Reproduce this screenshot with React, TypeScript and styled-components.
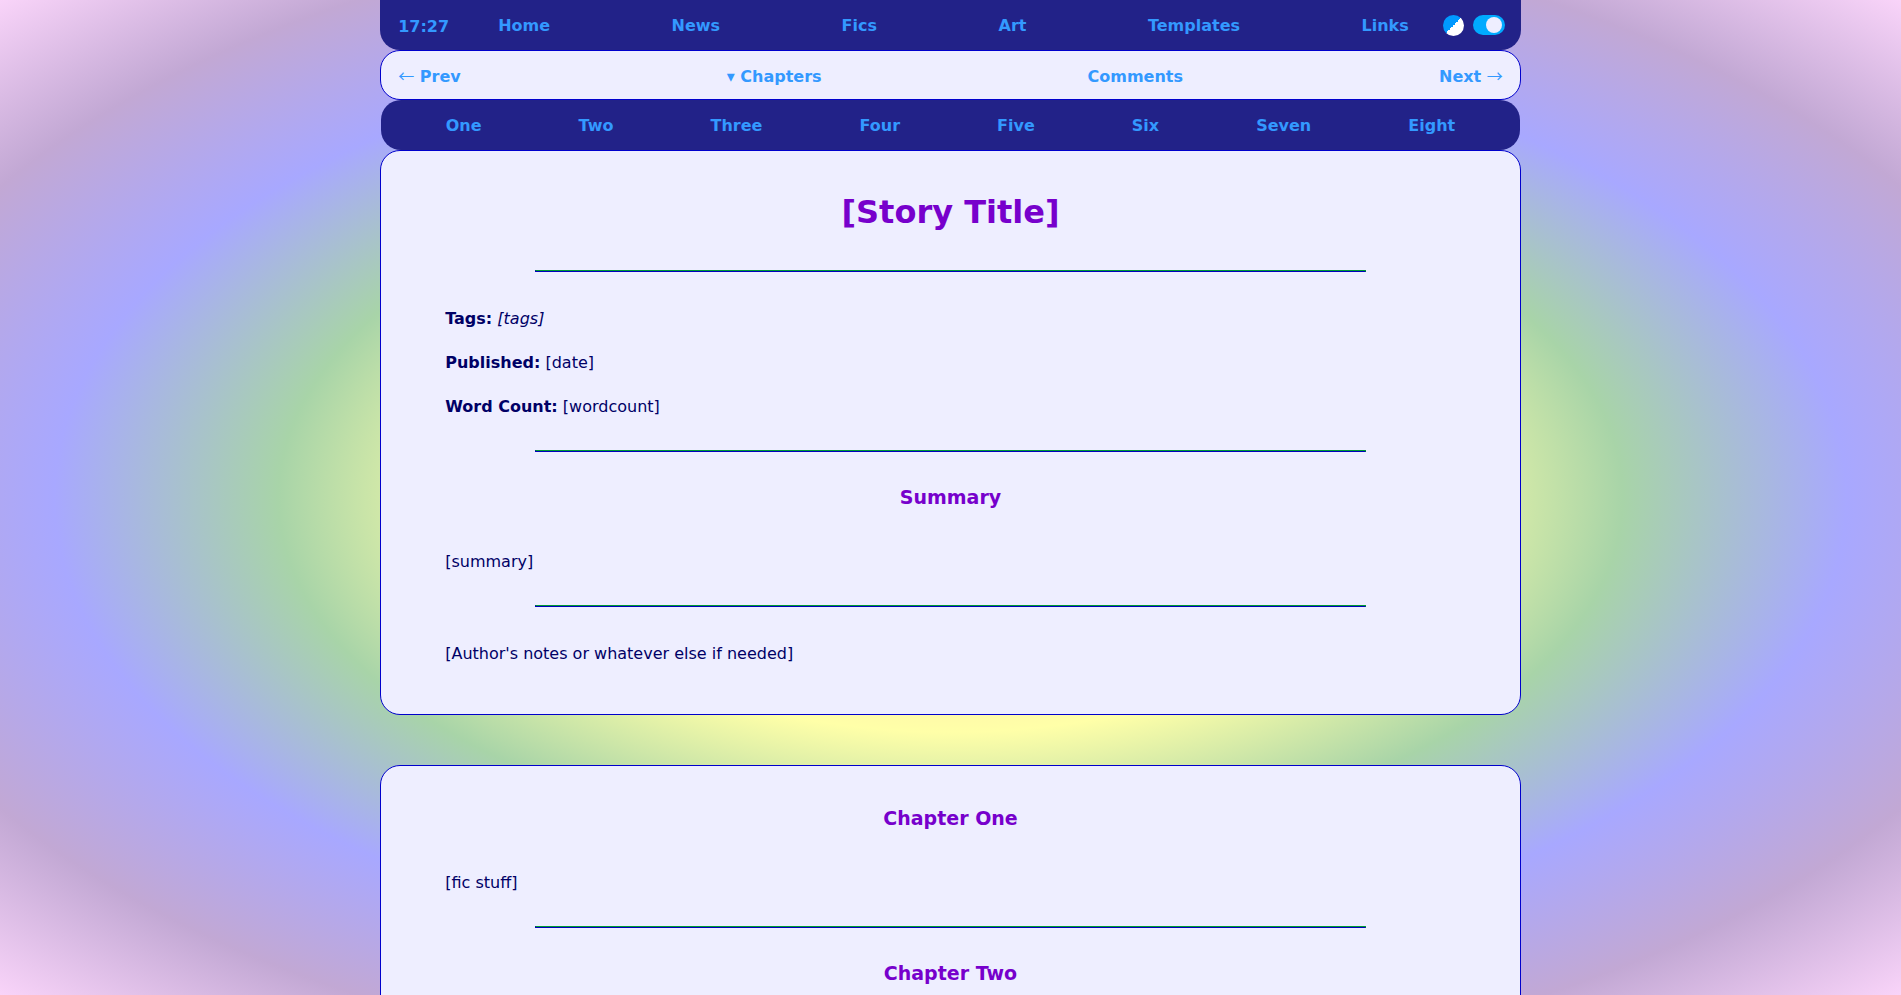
import React, { useState } from 'react';
import styled, { createGlobalStyle } from 'styled-components';

const GlobalStyle = createGlobalStyle`
  *, *::before, *::after {
    box-sizing: border-box;
  }
  html {
    background: radial-gradient(
      ellipse at center,
      #ffa8a8,
      #ffe0a8,
      #ffffa8,
      #a8d4a8,
      #a8a8ff,
      #c2a8d4,
      #f9d4f9
    ) fixed;
    scrollbar-width: none;
  }
  body {
    margin: 0;
    color: #000066;
    font-family: Verdana, "DejaVu Sans", sans-serif;
    font-size: 16px;
    line-height: 28px;
  }
`;

const Page = styled.div`
  width: 60%;
  margin: 0 auto;
`;

const TopBar = styled.header`
  display: flex;
  align-items: center;
  height: 50px;
  padding: 0 16px 0 18px;
  border-radius: 0 0 20px 20px;
  background: #222288;
  color: #3399ff;
  font-weight: bold;
`;

const Clock = styled.time`
  padding-top: 4px;
`;

const SiteLinks = styled.nav`
  flex: 1;
  display: flex;
  justify-content: space-between;
  margin: 0 34px 0 49px;
  padding-top: 2px;
`;

const BarLink = styled.a`
  color: #3399ff;
  font-weight: bold;
  text-decoration: none;
  white-space: nowrap;

  &:hover {
    text-decoration: underline;
  }
`;

const Controls = styled.div`
  display: flex;
  align-items: center;
  gap: 9px;
`;

const ContrastButton = styled.button`
  width: 21px;
  height: 21px;
  padding: 0;
  border: 0;
  border-radius: 50%;
  background: linear-gradient(135deg, #0099ff 50%, #ffffff 50%);
  cursor: pointer;
`;

const ThemeSwitch = styled.input`
  appearance: none;
  display: flex;
  align-items: center;
  width: 32px;
  height: 20px;
  margin: 0;
  padding: 0 3px;
  border-radius: 10px;
  background: #00aaff;
  cursor: pointer;

  &::before {
    content: "";
    width: 16px;
    height: 16px;
    border-radius: 50%;
    background: #eeeeff;
  }
  &:checked::before {
    margin-left: auto;
  }
`;

const StoryBar = styled.nav`
  display: flex;
  align-items: center;
  justify-content: space-between;
  height: 50px;
  padding: 3px 17px 0;
  border: 1px solid #0000cc;
  border-radius: 20px;
  background: #eeeeff;
`;

const Arrow = styled.span`
  font-family: "Noto Sans CJK JP", sans-serif;
  font-weight: normal;
  line-height: 16px;
`;

const MiddleItem = styled.span`
  padding-left: 10px;
`;

const ChaptersButton = styled.button`
  padding: 0;
  border: 0;
  background: none;
  color: #3399ff;
  font: inherit;
  font-weight: bold;
  cursor: pointer;
`;

const ChapterBar = styled.nav`
  display: flex;
  align-items: center;
  justify-content: space-around;
  height: 50px;
  margin: 0 1px;
  padding: 2px 16px 0;
  border-radius: 20px;
  background: #222288;
`;

const Card = styled.section`
  margin-bottom: 50px;
  padding: 40px 64px 46px;
  border: 1px solid #0000cc;
  border-radius: 20px;
  background: #eeeeff;
`;

const Title = styled.h1`
  margin: 0 0 37px;
  color: #7700cc;
  font-size: 32px;
  line-height: 42px;
  text-align: center;
`;

const Heading = styled.h2`
  margin: 0 0 39px;
  color: #7700cc;
  font-size: 19px;
  line-height: 24px;
  text-align: center;
`;

const Text = styled.p`
  margin: 0;

  & + & {
    margin-top: 16px;
  }
`;

const Divider = styled.hr`
  height: 2px;
  margin: 29px 90px 33px;
  border: 1px solid;
  border-color: #009933 #009933 #0000bb #0000bb;
`;

const sitePages = ['Home', 'News', 'Fics', 'Art', 'Templates', 'Links'];
const chapters = ['One', 'Two', 'Three', 'Four', 'Five', 'Six', 'Seven', 'Eight'];

export default function App() {
  const [open, setOpen] = useState(true);

  return (
    <>
      <GlobalStyle />
      <Page>
        <TopBar>
          <Clock>17:27</Clock>
          <SiteLinks aria-label="Site">
            {sitePages.map((name) => (
              <BarLink key={name} href={`#${name.toLowerCase()}`}>
                {name}
              </BarLink>
            ))}
          </SiteLinks>
          <Controls>
            <ContrastButton type="button" aria-label="Contrast" />
            <ThemeSwitch type="checkbox" role="switch" aria-label="Light theme" defaultChecked />
          </Controls>
        </TopBar>
        <StoryBar aria-label="Story">
          <BarLink href="#prev">
            <Arrow>←</Arrow> Prev
          </BarLink>
          <MiddleItem>
            <ChaptersButton type="button" aria-expanded={open} onClick={() => setOpen(!open)}>
              {open ? '▾' : '▸'} Chapters
            </ChaptersButton>
          </MiddleItem>
          <MiddleItem>
            <BarLink href="#comments">Comments</BarLink>
          </MiddleItem>
          <BarLink href="#next">
            Next <Arrow>→</Arrow>
          </BarLink>
        </StoryBar>
        {open && (
          <ChapterBar aria-label="Chapters">
            {chapters.map((name) => (
              <BarLink key={name} href={`#chapter-${name.toLowerCase()}`}>
                {name}
              </BarLink>
            ))}
          </ChapterBar>
        )}
        <main>
          <Card>
            <Title>[Story Title]</Title>
            <Divider />
            <Text>
              <b>Tags:</b> <i>[tags]</i>
            </Text>
            <Text>
              <b>Published:</b> [date]
            </Text>
            <Text>
              <b>Word Count:</b> [wordcount]
            </Text>
            <Divider />
            <Heading>Summary</Heading>
            <Text>[summary]</Text>
            <Divider />
            <Text>[Author's notes or whatever else if needed]</Text>
          </Card>
          <Card>
            <Heading id="chapter-one">Chapter One</Heading>
            <Text>[fic stuff]</Text>
            <Divider />
            <Heading id="chapter-two">Chapter Two</Heading>
          </Card>
        </main>
      </Page>
    </>
  );
}
